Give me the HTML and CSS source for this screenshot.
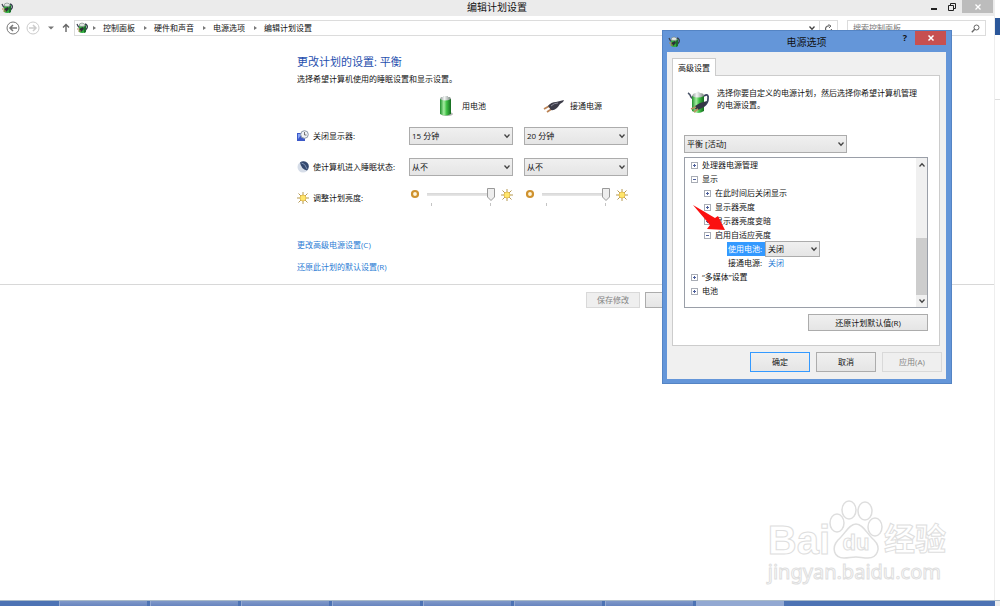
FILE: index.html
```
<!DOCTYPE html>
<html lang="zh-CN">
<head>
    <meta charset="UTF-8">
    <meta name="viewport" content="width=device-width, initial-scale=1.0">
    <title>编辑计划设置</title>
    <link rel="stylesheet" href="styles.css">
</head>
<body>
    <svg class="sprite" aria-hidden="true">
        <defs>
            <linearGradient id="green" x1="0" x2="1" y1="0" y2="0">
                <stop offset="0" stop-color="#1f8f2c"/>
                <stop offset="0.35" stop-color="#a4eda0"/>
                <stop offset="0.6" stop-color="#3fc045"/>
                <stop offset="1" stop-color="#14691f"/>
            </linearGradient>
            <linearGradient id="metal" x1="0" x2="1" y1="0" y2="0">
                <stop offset="0" stop-color="#8f9896"/>
                <stop offset="0.4" stop-color="#f4f8f6"/>
                <stop offset="1" stop-color="#79837f"/>
            </linearGradient>
        </defs>
        <symbol id="power" viewBox="0 0 24 24">
            <path d="M1 3 Q3 4 4 7 L6 9" fill="none" stroke="#465064" stroke-width="1.6"/>
            <path d="M17 6 Q22 3 21 9 Q21 13 17 16" fill="none" stroke="#3b4260" stroke-width="1.8"/>
            <path d="M5 6 V21 Q11 25 17 21 V6 Z" fill="url(#green)"/>
            <path d="M5 6 Q6 3 9 3 Q11 0 13 3 Q17 3 17 6 Q11 9 5 6 Z" fill="url(#metal)"/>
            <path d="M8 16 L13 13 L20 11 Q20 14 17 17 L11 20 Q7 20 8 16 Z" fill="#343745"/>
            <path d="M9 17 L4 19 M11 19 L7 22" stroke="#b79462" stroke-width="1.6"/>
        </symbol>
        <symbol id="power-small" viewBox="0 0 12 12">
            <path d="M1 2 Q2 5 4 6" fill="none" stroke="#3c4450" stroke-width="1.2"/>
            <path d="M9 2 Q12 3 11 6 Q10 8 8 9" fill="none" stroke="#39414f" stroke-width="1.5"/>
            <path d="M3 3 V10 Q6 12 10 10 V3 Z" fill="#2fae3c"/>
            <path d="M8 4 H10 V10 L8 11 Z" fill="#1c6e2d"/>
            <path d="M3 4 Q3 1 6 1 Q9 1 9 4 Q6 5 3 4 Z" fill="#dfe6e2" stroke="#747d7c" stroke-width="0.6"/>
            <path d="M3 7 L7 5 L8 7 L5 10 Z" fill="#2c3038"/>
            <path d="M1 7 H4 M2 9 H5" stroke="#a98a4c" stroke-width="1.2"/>
        </symbol>
        <symbol id="chevron" viewBox="0 0 8 8">
            <path d="M1.5 2.5 L4 5.2 L6.5 2.5" fill="none" stroke="#444" stroke-width="1.3"/>
        </symbol>
        <symbol id="dim" viewBox="0 0 10 10">
            <circle cx="5" cy="5" r="3" fill="#fff6dc" stroke="#cf922f" stroke-width="2.2"/>
        </symbol>
        <symbol id="sun" viewBox="0 0 12 12">
            <path d="M6 0 V12 M0 6 H12 M1.5 1.5 L10.5 10.5 M10.5 1.5 L1.5 10.5" stroke="#b59a55" stroke-width="1"/>
            <circle cx="6" cy="6" r="3" fill="#ffe66b" stroke="#dfb646" stroke-width="0.8"/>
        </symbol>
    </svg>

    <div class="desktop">
        <main class="window">
            <header class="titlebar">
                <svg class="titlebar__icon"><use href="#power-small"/></svg>
                <h1 class="titlebar__text">编辑计划设置</h1>
                <div class="titlebar__controls">
                    <button class="titlebar__button" aria-label="最小化"><svg width="8" height="8"><path d="M1 6 H7" stroke="#222" stroke-width="2"/></svg></button>
                    <button class="titlebar__button" aria-label="还原"><svg width="8" height="8" fill="none" stroke="#222"><path d="M2.5 2 V0.5 H7.5 V5.5 H6"/><path d="M0.5 2.5 H5.5 V7.5 H0.5 Z"/></svg></button>
                    <button class="titlebar__button titlebar__button--close" aria-label="关闭"><svg width="8" height="8"><path d="M1.5 1.5 L6.5 6.5 M6.5 1.5 L1.5 6.5" stroke="#fff" stroke-width="1.3"/></svg></button>
                </div>
            </header>

            <nav class="toolbar">
                <button class="toolbar__button" aria-label="后退"><svg width="14" height="14" fill="none" stroke="#777"><circle cx="7" cy="7" r="6"/><path d="M11 7 H4 M7 4 L4 7 L7 10" stroke-width="1.5"/></svg></button>
                <button class="toolbar__button" aria-label="前进"><svg width="14" height="14" fill="none" stroke="#ccc"><circle cx="7" cy="7" r="6"/><path d="M3 7 H10 M7 4 L10 7 L7 10" stroke-width="1.5"/></svg></button>
                <button class="toolbar__button" aria-label="最近"><svg width="6" height="6"><path d="M0 1.5 H6 L3 4.5 Z" fill="#777"/></svg></button>
                <button class="toolbar__button" aria-label="向上"><svg width="8" height="10" fill="none" stroke="#666"><path d="M4 9 V1.5 M1 4.5 L4 1.5 L7 4.5" stroke-width="1.4"/></svg></button>
                <div class="address">
                    <svg class="address__icon"><use href="#power-small"/></svg>
                    <ol class="crumbs">
                        <li class="crumbs__item"><a href="#">控制面板</a></li>
                        <li class="crumbs__item"><a href="#">硬件和声音</a></li>
                        <li class="crumbs__item"><a href="#">电源选项</a></li>
                        <li class="crumbs__item"><a href="#">编辑计划设置</a></li>
                    </ol>
                    <button class="address__button" aria-label="历史"><svg width="8" height="8"><use href="#chevron"/></svg></button>
                    <button class="address__button address__button--refresh" aria-label="刷新"><svg width="9" height="9" fill="none" stroke="#666"><path d="M7.5 5 A3 3 0 1 1 5.5 2" stroke-width="1.2"/><path d="M4.5 0.5 L7 2 L5 4"/></svg></button>
                </div>
                <div class="search">
                    <input class="search__field" type="text" placeholder="搜索控制面板" aria-label="搜索控制面板">
                    <svg width="9" height="9" fill="none" stroke="#666"><circle cx="5.5" cy="3.5" r="2.5"/><path d="M3.7 5.3 L0.8 8.2" stroke-width="1.4"/></svg>
                </div>
            </nav>

            <section class="plan">
                <h2 class="plan__title">更改计划的设置: 平衡</h2>
                <p class="plan__text">选择希望计算机使用的睡眠设置和显示设置。</p>

                <div class="plan__grid">
                    <div class="plan__source plan__source--battery">
                        <svg width="16" height="22" viewBox="0 0 16 22"><ellipse cx="9" cy="19" rx="6" ry="2" fill="#bbb"/><path d="M2 4 V19 Q7 22 13 19 V4 Z" fill="url(#green)"/><path d="M2 4 Q7 7 13 4 L12 2 H10 V1 H5 V2 H3 Z" fill="url(#metal)"/></svg>
                        用电池
                    </div>
                    <div class="plan__source plan__source--plug">
                        <svg width="22" height="16" viewBox="0 0 22 16"><path d="M1 11 L8 7 M4 14 L10 10" stroke="#bb8355" stroke-width="1.8"/><path d="M5 8 Q8 4 13 4 L21 2 L20 4 L17 6 Q13 13 8 12 Z" fill="#3c3c48"/><path d="M8 8 Q11 5 15 5" fill="none" stroke="#8a8a98"/></svg>
                        接通电源
                    </div>

                    <div class="plan__label">
                        <svg width="12" height="12" viewBox="0 0 12 12"><path d="M0 3 H8 V11 H0 Z" fill="#3c59c8"/><path d="M1 4 L5 4 L1 9 Z" fill="#87a4f4"/><circle cx="7.5" cy="4.5" r="3.8" fill="#eef1f5" stroke="#8d98a8"/><path d="M7.5 2 V5 H9.5" fill="none" stroke="#555" stroke-width="0.8"/></svg>
                        关闭显示器:
                    </div>
                    <div class="drop">
                        <select class="drop__field" aria-label="关闭显示器: 用电池"><option>15 分钟</option></select>
                        <svg class="drop__arrow"><use href="#chevron"/></svg>
                    </div>
                    <div class="drop">
                        <select class="drop__field" aria-label="关闭显示器: 接通电源"><option>20 分钟</option></select>
                        <svg class="drop__arrow"><use href="#chevron"/></svg>
                    </div>

                    <div class="plan__label">
                        <svg width="12" height="12" viewBox="0 0 12 12"><circle cx="6" cy="6" r="5.5" fill="#d6dde8"/><path d="M3 1.5 A5.2 5.2 0 1 1 10 9.5 Q4 8 3 1.5 Z" fill="#34496f"/><path d="M4.5 2 Q8 2 10 8" fill="none" stroke="#7f93b5"/></svg>
                        使计算机进入睡眠状态:
                    </div>
                    <div class="drop">
                        <select class="drop__field" aria-label="睡眠: 用电池"><option>从不</option></select>
                        <svg class="drop__arrow"><use href="#chevron"/></svg>
                    </div>
                    <div class="drop">
                        <select class="drop__field" aria-label="睡眠: 接通电源"><option>从不</option></select>
                        <svg class="drop__arrow"><use href="#chevron"/></svg>
                    </div>

                    <div class="plan__label plan__label--low">
                        <svg width="12" height="12"><use href="#sun"/></svg>
                        调整计划亮度:
                    </div>
                    <div class="bright">
                        <svg width="10" height="10"><use href="#dim"/></svg>
                        <div class="bright__track">
                            <input class="bright__range" type="range" min="0" max="100" value="100" aria-label="亮度: 用电池">
                            <div class="bright__ticks"></div>
                        </div>
                        <svg width="12" height="12"><use href="#sun"/></svg>
                    </div>
                    <div class="bright">
                        <svg width="10" height="10"><use href="#dim"/></svg>
                        <div class="bright__track">
                            <input class="bright__range" type="range" min="0" max="100" value="100" aria-label="亮度: 接通电源">
                            <div class="bright__ticks"></div>
                        </div>
                        <svg width="12" height="12"><use href="#sun"/></svg>
                    </div>
                </div>

                <div class="plan__links">
                    <a href="#">更改高级电源设置(C)</a>
                    <a href="#">还原此计划的默认设置(R)</a>
                </div>
            </section>

            <footer class="actions">
                <button class="button button--small" disabled>保存修改</button>
                <button class="button button--small" aria-label="取消"></button>
            </footer>
        </main>
        <aside class="behind">
            <div class="behind__tab"></div>
            <div class="behind__line"></div>
        </aside>
    </div>

    <div class="taskbar">
        <div class="taskbar__item"></div>
        <div class="taskbar__item"></div>
        <div class="taskbar__item"></div>
        <div class="taskbar__item"></div>
        <div class="taskbar__item"></div>
        <div class="taskbar__item"></div>
        <div class="taskbar__item"></div>
        <div class="taskbar__item taskbar__item--active"></div>
        <div class="taskbar__peek"></div>
    </div>

    <div class="dialog" role="dialog" aria-label="电源选项">
        <header class="dialog__bar">
            <svg class="dialog__icon"><use href="#power-small"/></svg>
            <h2 class="dialog__title">电源选项</h2>
            <div class="dialog__controls">
                <button class="dialog__help">?</button>
                <button class="dialog__close" aria-label="关闭"><svg width="8" height="8"><path d="M1.5 1.5 L6.5 6.5 M6.5 1.5 L1.5 6.5" stroke="#fff" stroke-width="1.5"/></svg></button>
            </div>
        </header>
        <div class="dialog__body">
            <button class="tab">高级设置</button>
            <div class="panel">
                <div class="panel__intro">
                    <svg width="24" height="24"><use href="#power"/></svg>
                    <p>选择你要自定义的电源计划，然后选择你希望计算机管理的电源设置。</p>
                </div>
                <div class="drop drop--plan">
                    <select class="drop__field" aria-label="电源计划"><option>平衡 [活动]</option></select>
                    <svg class="drop__arrow"><use href="#chevron"/></svg>
                </div>
                <div class="tree">
                    <ul class="tree__list">
                        <li class="tree__row"><span class="tree__box tree__box--plus"></span>处理器电源管理</li>
                        <li class="tree__row"><span class="tree__box"></span>显示</li>
                        <li class="tree__row tree__row--sub"><span class="tree__box tree__box--plus"></span>在此时间后关闭显示</li>
                        <li class="tree__row tree__row--sub"><span class="tree__box tree__box--plus"></span>显示器亮度</li>
                        <li class="tree__row tree__row--sub"><span class="tree__box tree__box--plus"></span>显示器亮度变暗</li>
                        <li class="tree__row tree__row--sub"><span class="tree__box"></span>启用自适应亮度</li>
                        <li class="tree__row tree__row--leaf">
                            <label class="tree__selected" for="adaptive">使用电池:</label>
                            <span class="drop drop--tree">
                                <select class="drop__field" id="adaptive"><option>关闭</option></select>
                                <svg class="drop__arrow"><use href="#chevron"/></svg>
                            </span>
                        </li>
                        <li class="tree__row tree__row--leaf"><span class="tree__name">接通电源:</span><a href="#">关闭</a></li>
                        <li class="tree__row"><span class="tree__box tree__box--plus"></span>“多媒体”设置</li>
                        <li class="tree__row"><span class="tree__box tree__box--plus"></span>电池</li>
                    </ul>
                    <div class="scroll">
                        <svg class="scroll__up" width="8" height="8"><use href="#chevron"/></svg>
                        <div class="scroll__thumb"></div>
                        <svg width="8" height="8"><use href="#chevron"/></svg>
                    </div>
                </div>
                <button class="button button--restore">还原计划默认值(R)</button>
            </div>
            <div class="dialog__actions">
                <button class="button button--default">确定</button>
                <button class="button">取消</button>
                <button class="button" disabled>应用(A)</button>
            </div>
        </div>
        <svg class="pointer" width="34" height="28" viewBox="0 0 34 28"><path d="M0 0 L22 13 L25 11 L32 25 L14 24 L17 20 Z" fill="#fb1010"/></svg>
    </div>

    <div class="watermark">
        <div class="watermark__logo">
            <span class="watermark__bai">Bai</span>
            <span class="watermark__paw">
                <svg width="54" height="60" viewBox="0 0 54 60" fill="#fff" stroke="#dedede" stroke-width="1.5">
                    <ellipse cx="8" cy="23" rx="7" ry="9"/>
                    <ellipse cx="20" cy="10" rx="7" ry="9"/>
                    <ellipse cx="36" cy="11" rx="7" ry="9"/>
                    <ellipse cx="46" cy="27" rx="7" ry="9"/>
                    <path d="M27 24 C34 24 38 34 45 40 C53 48 48 58 39 58 C34 58 31 57 27 57 C22 57 20 58 15 58 C5 58 2 48 9 40 C16 34 20 24 27 24 Z"/>
                </svg>
                <span class="watermark__du">du</span>
            </span>
            <span class="watermark__cn">经验</span>
        </div>
        <div class="watermark__url">jingyan.baidu.com</div>
    </div>
</body>
</html>
```
FILE: styles.css
```
:root {
    --blue: #6496d9;
    --link: #2a7bd4;
    --border: #acacac;
    --face: #f0f0f0;
    --outline: #dedede;
}

* {
    margin: 0;
    padding: 0;
    box-sizing: border-box;
}

body {
    display: flex;
    flex-direction: column;
    min-height: 100vh;
    overflow: hidden;
    background: #fff;
    color: #111;
    font-family: "Open Sans", "Noto Sans CJK SC", sans-serif;
    font-size: 8px;
    line-height: 12px;
}

button,
input,
select {
    font: inherit;
    color: inherit;
}

button {
    display: flex;
    align-items: center;
    justify-content: center;
    border: 0;
    background: none;
}

svg {
    display: block;
    flex: none;
}

ul,
ol {
    list-style: none;
}

a {
    color: var(--link);
    text-decoration: none;
}

.sprite {
    position: absolute;
    width: 0;
    height: 0;
}

.desktop {
    display: flex;
    flex: 1;
}

.window {
    flex: 1;
    border-right: 1px solid #eee;
}

/* window title */

.titlebar {
    display: grid;
    grid-template-columns: 1fr auto 1fr;
    height: 16px;
    background: #ebebeb;
}

.titlebar__icon {
    width: 12px;
    height: 12px;
    margin: 2px 1px;
}

.titlebar__text {
    font-size: 10px;
    font-weight: normal;
    line-height: 15px;
}

.titlebar__controls {
    display: flex;
    justify-content: flex-end;
    padding-right: 1px;
}

.titlebar__button {
    width: 18px;
    height: 13px;
}

.titlebar__button--close {
    width: 31px;
    margin-left: 1px;
    background: #bcbcbc;
}

/* navigation */

.toolbar {
    display: flex;
    align-items: center;
    gap: 6px;
    height: 24px;
    padding: 0 8px 0 6px;
}

.toolbar__button:nth-of-type(3) {
    margin: 0 2px;
}

.address {
    display: flex;
    flex: 1;
    align-items: center;
    height: 16px;
    margin-left: -2px;
    border: 1px solid #dcdcdc;
}

.address__icon {
    width: 12px;
    height: 12px;
    margin: 0 3px 0 1px;
}

.crumbs {
    display: flex;
    flex: 1;
}

.crumbs__item {
    display: flex;
    align-items: center;
}

.crumbs__item a {
    color: #111;
}

.crumbs__item::before {
    content: "";
    margin: 0 7px 0 2px;
    border: 2px solid transparent;
    border-left: 3px solid #777;
    border-right: 0;
}

.crumbs__item + .crumbs__item::before {
    margin-left: 9px;
}

.address__button {
    width: 14px;
    height: 14px;
}

.address__button--refresh {
    width: 18px;
    border-left: 1px solid #dcdcdc;
}

.search {
    display: flex;
    align-items: center;
    width: 139px;
    height: 16px;
    margin-left: 3px;
    padding: 0 5px;
    border: 1px solid #dcdcdc;
}

.search__field {
    flex: 1;
    min-width: 0;
    border: 0;
    outline: 0;
}

.search__field::placeholder {
    color: #777;
}

/* plan settings */

.plan {
    padding: 14px 0 11px 297px;
    border-bottom: 1px solid #d8d8d8;
}

.plan__title {
    color: #1f4fae;
    font-size: 11px;
    font-weight: normal;
    line-height: 16px;
}

.plan__text {
    margin-top: 3px;
}

.plan__grid {
    display: grid;
    grid-template-columns: 101px 104px 104px;
    grid-template-rows: 16px 18px 18px 16px;
    column-gap: 11px;
    row-gap: 13px;
    align-items: center;
    margin-top: 13px;
}

.plan__source {
    display: flex;
    align-items: center;
    gap: 5px;
    height: 16px;
}

.plan__source--battery {
    grid-column: 2;
    gap: 8px;
    padding-left: 29px;
}

.plan__source--plug {
    padding-left: 19px;
}

.plan__label {
    display: flex;
    align-items: center;
    gap: 4px;
    white-space: nowrap;
}

.plan__label--low {
    padding-top: 2px;
}

.plan__links {
    display: flex;
    flex-direction: column;
    align-items: flex-start;
    gap: 10px;
    margin-top: 34px;
}

.drop {
    display: grid;
    align-items: center;
    height: 18px;
}

.drop__field {
    grid-area: 1 / 1;
    width: 100%;
    height: 100%;
    padding: 0 2px;
    border: 1px solid var(--border);
    border-radius: 0;
    background: linear-gradient(#f0f0f0, #e5e5e5);
    appearance: none;
}

.drop__arrow {
    grid-area: 1 / 1;
    justify-self: end;
    width: 8px;
    height: 8px;
    margin-right: 2px;
    pointer-events: none;
}

.bright {
    display: flex;
    align-items: flex-start;
    justify-content: space-between;
    padding-left: 1px;
}

.bright svg {
    margin-top: 1px;
}

.bright__track {
    width: 68px;
}

.bright__range {
    display: block;
    width: 100%;
    height: 13px;
    background: linear-gradient(#d6d6d6, #e8e8e8) center / 100% 3px no-repeat;
    appearance: none;
}

.bright__range::-webkit-slider-thumb {
    width: 8px;
    height: 13px;
    background: url("data:image/svg+xml,%3Csvg xmlns='http://www.w3.org/2000/svg' width='8' height='13'%3E%3Cpath d='M.5 .5H7.5V9L4 12.5L.5 9Z' fill='%23eee' stroke='%23999'/%3E%3C/svg%3E");
    appearance: none;
}

.bright__ticks {
    height: 3px;
    margin: 2px 4px 0;
    border: 1px solid #c4c4c4;
    border-width: 0 1px;
}

/* buttons */

.button {
    width: 60px;
    height: 20px;
    border: 1px solid var(--border);
    background: linear-gradient(#f0f0f0, #e5e5e5);
}

.button:disabled {
    border-color: #d9d9d9;
    background: #efefef;
    color: #838383;
}

.button--small {
    width: 54px;
    height: 16px;
}

.button--default {
    border-color: #3399ff;
}

.button--restore {
    width: 120px;
    height: 17px;
    margin: 6px 0 0 auto;
}

.actions {
    display: flex;
    gap: 5px;
    padding: 7px 0 0 586px;
}

/* edge of the program under the window */

.behind {
    width: 5px;
    padding-top: 18px;
}

.behind__tab {
    height: 17px;
    background: #2b579a;
}

.behind__line {
    height: 65px;
    border-bottom: 1px solid #ddd;
}

.taskbar {
    display: flex;
    gap: 3px;
    height: 6px;
    padding-left: 59px;
    border-top: 1px solid #a9bac8;
    background: #4d73b4;
}

.taskbar__item {
    width: 88px;
    border-left: 1px solid #94a9d1;
    background: linear-gradient(#7f98c9, #6885bf);
}

.taskbar__item--active {
    background: #92a8d2;
}

.taskbar__peek {
    width: 5px;
    margin-left: auto;
    background: #eee;
}

/* power options dialog */

.dialog {
    position: absolute;
    top: 30px;
    left: 662px;
    width: 290px;
    padding: 0 5px 4px 4px;
    border: 1px solid #5484c4;
    background: var(--blue);
}

.dialog__bar {
    display: grid;
    grid-template-columns: 1fr auto 1fr;
    align-items: center;
    height: 21px;
}

.dialog__icon {
    width: 12px;
    height: 12px;
    margin-left: 1px;
}

.dialog__title {
    font-size: 10px;
    font-weight: normal;
}

.dialog__controls {
    display: flex;
    align-self: start;
    justify-content: flex-end;
}

.dialog__help {
    width: 20px;
    font-size: 9px;
    font-weight: bold;
}

.dialog__close {
    width: 31px;
    height: 14px;
    background: #c75050;
}

.dialog__body {
    padding: 6px 6px 7px 5px;
    background: var(--face);
}

.tab {
    position: relative;
    width: 44px;
    height: 18px;
    margin-bottom: -1px;
    border: 1px solid #ccc;
    border-bottom: 0;
    background: #fff;
}

.panel {
    padding: 11px 11px 14px;
    border: 1px solid #ccc;
    background: #fff;
}

.panel__intro {
    display: flex;
    gap: 6px;
    padding: 0 6px 0 3px;
    margin-bottom: 21px;
}

.panel__intro svg {
    margin-top: 3px;
}

.drop--plan {
    width: 163px;
}

.tree {
    display: flex;
    height: 151px;
    margin-top: 4px;
    border: 1px solid #9a9fa8;
}

.tree__list {
    flex: 1;
}

.tree__row {
    display: flex;
    align-items: center;
    height: 14px;
    padding-left: 6px;
}

.tree__row--sub {
    padding-left: 19px;
}

.tree__row--leaf {
    padding-left: 42px;
}

.tree__box {
    width: 7px;
    height: 7px;
    margin-right: 4px;
    border: 1px solid #a9adb5;
    background: linear-gradient(#4d5f9c, #4d5f9c) center / 3px 1px no-repeat;
}

.tree__box--plus {
    background:
        linear-gradient(#4d5f9c, #4d5f9c) center / 3px 1px no-repeat,
        linear-gradient(#4d5f9c, #4d5f9c) center / 1px 3px no-repeat;
}

.tree__selected {
    width: 38px;
    padding-left: 1px;
    background: #3399ff;
    color: #fff;
    line-height: 14px;
}

.tree__name {
    width: 41px;
    padding-left: 1px;
}

.drop--tree {
    width: 55px;
    height: 16px;
}

.scroll {
    display: flex;
    flex-direction: column;
    align-items: center;
    width: 11px;
    padding: 3px 0 2px;
    background: #f0f0f0;
}

.scroll__up {
    transform: rotate(180deg);
}

.scroll__thumb {
    width: 100%;
    height: 57px;
    margin: auto 0 2px;
    background: #cdcdcd;
}

.dialog__actions {
    display: flex;
    justify-content: flex-end;
    gap: 6px;
    margin: 6px -2px 0 0;
}

.pointer {
    position: absolute;
    top: 174px;
    left: 30px;
}

/* watermark */

.watermark {
    position: absolute;
    right: 54px;
    bottom: 22px;
    color: #fff;
    -webkit-text-stroke: 1px var(--outline);
}

.watermark__logo {
    display: flex;
    align-items: flex-end;
    height: 60px;
}

.watermark__bai {
    font: bold 40px/40px "Liberation Sans", sans-serif;
}

.watermark__paw {
    display: grid;
    justify-items: center;
    align-items: end;
    margin: 0 1px 0 -1px;
}

.watermark__paw svg,
.watermark__du {
    grid-area: 1 / 1;
}

.watermark__du {
    font: bold 22px/34px "Liberation Sans", sans-serif;
}

.watermark__cn {
    font: bold 31px/40px "Liberation Sans", "Noto Sans CJK SC", sans-serif;
}

.watermark__url {
    font: 20px/24px "Noto Sans", sans-serif;
}
```
